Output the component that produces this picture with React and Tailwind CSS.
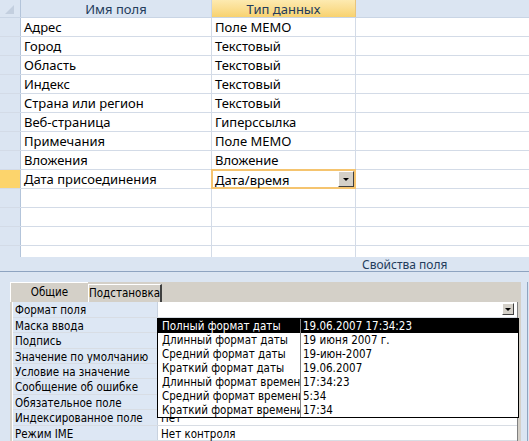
import React from 'react';

const fields = [
  ['Адрес', 'Поле MEMO'],
  ['Город', 'Текстовый'],
  ['Область', 'Текстовый'],
  ['Индекс', 'Текстовый'],
  ['Страна или регион', 'Текстовый'],
  ['Веб-страница', 'Гиперссылка'],
  ['Примечания', 'Поле MEMO'],
  ['Вложения', 'Вложение'],
  ['Дата присоединения', 'Дата/время'],
];

const props = [
  ['Формат поля', ''],
  ['Маска ввода', ''],
  ['Подпись', ''],
  ['Значение по умолчанию', ''],
  ['Условие на значение', ''],
  ['Сообщение об ошибке', ''],
  ['Обязательное поле', ''],
  ['Индексированное поле', 'Нет'],
  ['Режим IME', 'Нет контроля'],
];

const formats = [
  ['Полный формат даты', '19.06.2007 17:34:23'],
  ['Длинный формат даты', '19 июня 2007 г.'],
  ['Средний формат даты', '19-июн-2007'],
  ['Краткий формат даты', '19.06.2007'],
  ['Длинный формат времени', '17:34:23'],
  ['Средний формат времени', '5:34'],
  ['Краткий формат времени', '17:34'],
];

function ComboButton({ className }) {
  return (
    <div className={`flex items-center justify-center bg-[#d4d0c8] border-t border-l border-t-white border-l-white border-r border-b border-r-[#404040] border-b-[#404040] ${className}`}>
      <div className="w-0 h-0 border-l-[3px] border-r-[3px] border-t-[3px] border-l-transparent border-r-transparent border-t-black" />
    </div>
  );
}

export default function App() {
  return (
    <div className="w-[529px] h-[441px] overflow-hidden bg-[#dbe5f2] flex flex-col font-['Noto_Sans',sans-serif]">
      {/* Table design grid */}
      <div className="h-[258px] bg-white flex flex-col text-[13px] leading-[18px] text-black">
        {/* Header */}
        <div className="h-[18px] flex shrink-0 border-b border-[#c9d5e5]">
          <div className="w-[21px] bg-[#dbe5f2] border-r border-[#b3c4da] relative">
            <div className="absolute left-[5px] bottom-[3px] w-0 h-0 border-b-[9px] border-l-[9px] border-b-[#c3cfdf] border-l-transparent" />
          </div>
          <div className="w-[191px] bg-[#dbe5f2] border-r border-[#c9d5e5] text-center text-[#233c5c]">Имя поля</div>
          <div className="w-[144px] bg-gradient-to-b from-[#fdeab0] to-[#f8d26f] border-r border-[#e8c47c] text-center text-[#233c5c]">Тип данных</div>
          <div className="flex-1 bg-[#dbe5f2]" />
        </div>

        {fields.map(([name, type], i) => {
          const current = i === fields.length - 1;
          return (
            <div key={name} className="h-[19px] flex shrink-0 border-b border-[#d3dbe7]">
              <div className={`w-[21px] border-r border-[#b3c4da] ${current ? 'bg-[#fcd46c]' : 'bg-[#dbe5f2]'}`} />
              <div className="w-[191px] border-r border-[#d3dbe7] pl-[3px]">{name}</div>
              {current ? (
                <div className="w-[145px] -ml-[1px] -mt-[1px] h-[20px] border-2 border-[#f5c46f] flex items-start pl-[2px] relative">
                  <span className="leading-[16px] pt-[1px]">{type}</span>
                  <ComboButton className="absolute right-0 top-0 w-[16px] h-[16px]" />
                </div>
              ) : (
                <div className="w-[144px] border-r border-[#d3dbe7] pl-[3px]">{type}</div>
              )}
              <div className="flex-1" />
            </div>
          );
        })}

        {[0, 1, 2].map((k) => (
          <div key={k} className="h-[19px] flex shrink-0 border-b border-[#d3dbe7]">
            <div className="w-[21px] bg-[#dbe5f2] border-r border-[#b3c4da]" />
            <div className="w-[191px] border-r border-[#d3dbe7]" />
            <div className="w-[144px] border-r border-[#d3dbe7]" />
            <div className="flex-1" />
          </div>
        ))}
        <div className="flex-1 flex">
          <div className="w-[21px] bg-[#dbe5f2] border-r border-[#b3c4da]" />
          <div className="w-[191px] border-r border-[#d3dbe7]" />
          <div className="w-[144px] border-r border-[#d3dbe7]" />
          <div className="flex-1" />
        </div>
      </div>

      {/* Properties caption */}
      <div className="h-[15px] shrink-0 bg-[#dbe5f2] border-b border-[#8ea4c1] pl-[362px] text-[12px] leading-[16px] text-[#233c5c]">
        Свойства поля
      </div>

      {/* Properties panel */}
      <div className="flex-1 bg-[#dbe5f2] pl-[10px] pt-[10px] pr-[1px] flex">
        <div className="flex-1 flex border-r border-[#8ea4c1] pr-[5px]">
          <div className="w-[511px] bg-[#d4d0c8] flex flex-col font-['DejaVu_Sans_Condensed','DejaVu_Sans',sans-serif] text-[11.5px] text-black">
            {/* Tabs */}
            <div className="h-[20px] flex shrink-0">
              <div className="w-[78px] border-l border-t border-white text-center leading-[19px]">Общие</div>
              <div className="w-[74px] mt-[2px] border-l border-t border-white border-r-2 border-r-[#404040] text-center leading-[17px] whitespace-nowrap">Подстановка</div>
            </div>

            {/* Property grid */}
            <div className="relative flex-1 ml-[2px] mr-[3px] border-l border-white border-r border-r-[#808080] bg-white">
              {props.map(([label, value], i) => (
                <div key={label} className="h-[15.4px] flex border-b border-[#d8dde4]">
                  <div className="w-[145px] bg-[#dde7f4] border-r border-[#c8d2df] pl-[2px] leading-[16px] whitespace-nowrap overflow-hidden">{label}</div>
                  <div className="flex-1 pl-[3px] leading-[16px] relative">
                    {value}
                    {i === 0 && <ComboButton className="absolute right-[3px] top-[1px] w-[12px] h-[12px]" />}
                  </div>
                </div>
              ))}

              {/* Open format list */}
              <div className="absolute left-[144px] top-[16px] w-[362px] h-[100px] border border-black bg-white">
                {formats.map(([name, sample], i) => (
                  <div key={name} className={`h-[14px] flex leading-[14px] ${i === 0 ? 'bg-black text-white' : ''}`}>
                    <div className="w-[143px] pl-[4px] whitespace-nowrap overflow-hidden border-r border-[#808080]">{name}</div>
                    <div className="flex-1 pl-[2px]">{sample}</div>
                  </div>
                ))}
              </div>
            </div>
          </div>
        </div>
      </div>
    </div>
  );
}
